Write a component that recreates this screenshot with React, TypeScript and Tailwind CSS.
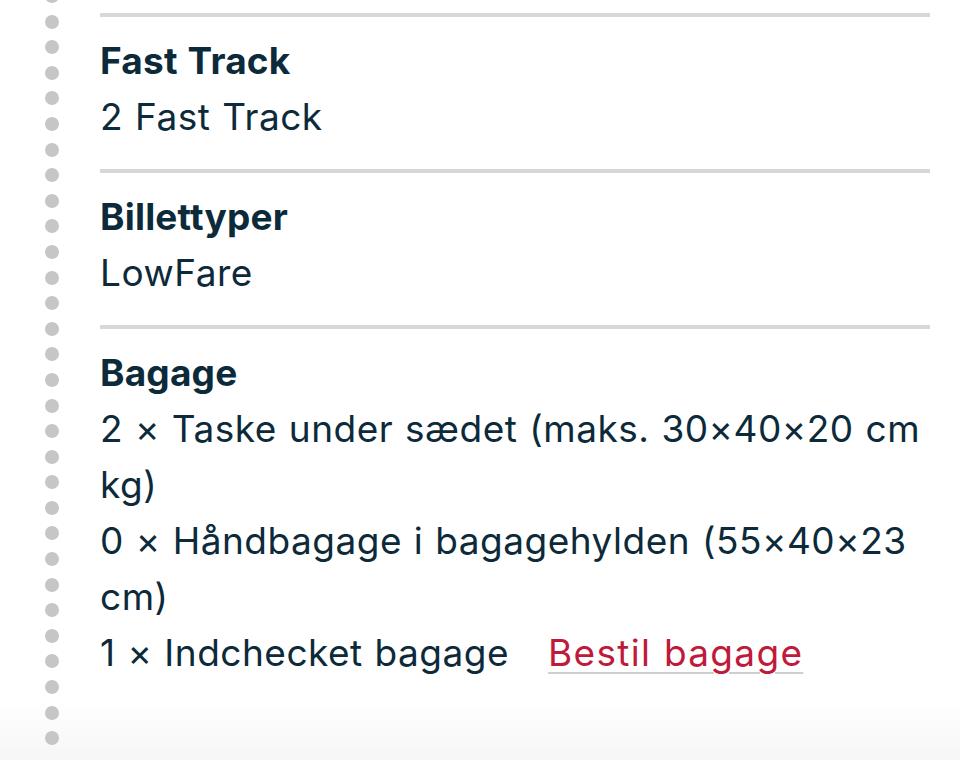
import React from "react";

const dots = Array.from({ length: 30 }, (_, i) => i);

function Section({ title, children }: { title: string; children: React.ReactNode }) {
  return (
    <div>
      <div className="h-[4px] bg-[#d7d7d7]" />
      <div className="pt-[16px] pb-[24px]">
        <div className="font-bold tracking-[0.2px]">{title}</div>
        {children}
      </div>
    </div>
  );
}

export default function App() {
  return (
    <div
      className="relative w-[960px] h-[760px] overflow-hidden bg-white text-[#0c2a3a] text-[37px] leading-[56px] tracking-[0.5px] [word-spacing:1px]"
      style={{ fontFamily: "Inter, 'Noto Sans', sans-serif" }}
    >
      <div className="absolute left-0 right-0 bottom-0 h-[60px] bg-gradient-to-b from-white to-[#f6f6f6]" />
      <div className="relative flex h-full">
        <div className="w-[100px] flex flex-col items-center pl-[4px] pt-[13px] gap-[11.6px] -mt-[24px]">
          {dots.map((i) => (
            <div key={i} className="w-[14px] h-[14px] shrink-0 rounded-full bg-[#c6c6c6]" />
          ))}
        </div>
        <div className="w-[830px] pt-[13px]">
          <Section title="Fast Track">
            <div>2 Fast Track</div>
          </Section>
          <Section title="Billettyper">
            <div>LowFare</div>
          </Section>
          <div>
            <div className="h-[4px] bg-[#d7d7d7]" />
            <div className="pt-[16px]">
              <div className="font-bold tracking-[0.2px]">Bagage</div>
              <div>2 × Taske under sædet (maks. 30×40×20 cm</div>
              <div>kg)</div>
              <div>0 × Håndbagage i bagagehylden (55×40×23</div>
              <div>cm)</div>
              <div>
                1 × Indchecket bagage
                <a
                  href="#"
                  className="ml-[39px] tracking-[1.3px] text-[#c01a3b] underline decoration-[#cfcfcf] decoration-[2px] underline-offset-[6px]"
                >
                  Bestil bagage
                </a>
              </div>
            </div>
          </div>
        </div>
      </div>
    </div>
  );
}
